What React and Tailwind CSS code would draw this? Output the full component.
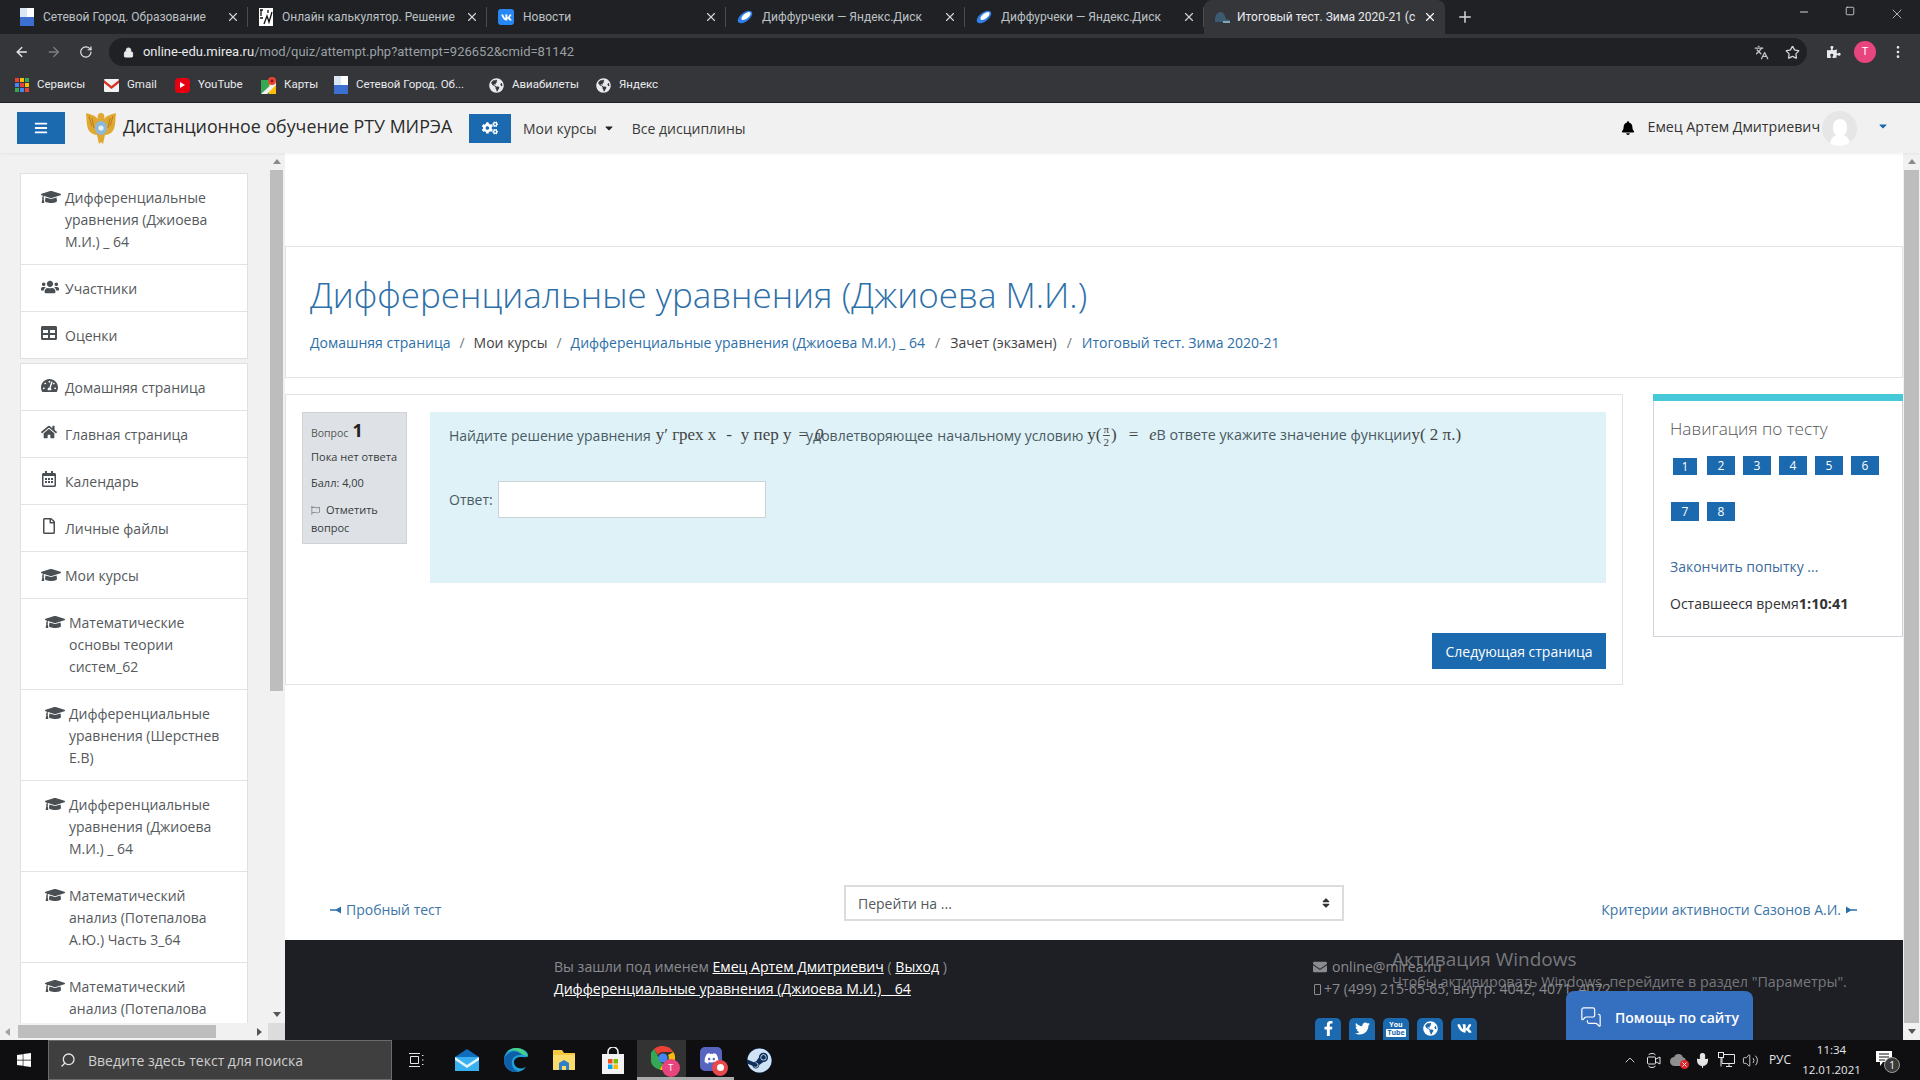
import React from "react";
import {
  ArrowLeft,
  ArrowRight,
  RotateCw,
  Lock,
  Star,
  MoreVertical,
  X,
  Plus,
  Minus,
  Search,
  ChevronUp,
  Mic,
  Volume2,
  Languages,
  MessagesSquare,
  Square,
} from "lucide-react";
import {
  FaBars,
  FaBell,
  FaCaretDown,
  FaCogs,
  FaEnvelope,
  FaFacebookF,
  FaGraduationCap,
  FaHome,
  FaPuzzlePiece,
  FaRegCalendarAlt,
  FaRegFile,
  FaRegFlag,
  FaSort,
  FaSteam,
  FaTable,
  FaTachometerAlt,
  FaTwitter,
  FaUsers,
  FaVk,
  FaWindows,
  FaGlobeAmericas,
  FaDiscord,
} from "react-icons/fa";

const UI = "font-['Open_Sans',sans-serif]";
const CHROME = "font-['Roboto',sans-serif]";

function SetevoiIcon() {
  return (
    <span className="w-[14px] h-[18px] flex flex-col shrink-0 bg-white">
      <span className="h-1/2 w-1/2 bg-[#dbe6f5]" />
      <span className="h-1/2 bg-[#3d6fd0]" />
    </span>
  );
}

function CalcIcon() {
  return (
    <span className="w-[14px] h-[18px] shrink-0 bg-white flex items-center justify-center">
      <svg width="14" height="16" viewBox="0 0 14 16" fill="none" stroke="#111" strokeWidth="1.3">
        <path d="M1 1h3M2 1v6M1 9h3M9 1v3M5 15l3-8 2 6 3-10" />
      </svg>
    </span>
  );
}

function VkIcon() {
  return (
    <span className="w-[16px] h-[16px] rounded-[3px] bg-[#2787f5] flex items-center justify-center shrink-0">
      <FaVk className="text-white text-[11px]" />
    </span>
  );
}

function DiskIcon() {
  return (
    <svg width="16" height="16" viewBox="0 0 16 16" className="shrink-0">
      <ellipse cx="8" cy="8" rx="8.5" ry="4.5" transform="rotate(-38 8 8)" fill="#2f7fe6" />
      <ellipse cx="9" cy="7" rx="5.5" ry="2.6" transform="rotate(-38 9 7)" fill="#ffffff" />
    </svg>
  );
}

function MoodleTabIcon() {
  return (
    <svg width="17" height="14" viewBox="0 0 17 14" className="shrink-0">
      <path d="M1 11C1 4 4 2 7 2s4 4 5 7l4 1v2H1z" fill="#3c5a70" />
      <path d="M9 11h7v2H9z" fill="#7fa6b8" />
    </svg>
  );
}

const tabs = [
  { title: "Сетевой Город. Образование", icon: <SetevoiIcon /> },
  { title: "Онлайн калькулятор. Решение", icon: <CalcIcon /> },
  { title: "Новости", icon: <VkIcon /> },
  { title: "Диффурчеки — Яндекс.Диск", icon: <DiskIcon /> },
  { title: "Диффурчеки — Яндекс.Диск", icon: <DiskIcon /> },
];

function ChromeTabs() {
  return (
    <div className={`h-[34px] bg-[#202124] flex pl-[9px] items-stretch ${CHROME}`}>
      {tabs.map((tab, i) => (
        <div key={i} className="w-[239px] flex items-center relative pl-[11px] pr-[8px] gap-[9px]">
          {tab.icon}
          <span className="text-[12px] text-[#bdc1c6] flex-1 whitespace-nowrap overflow-hidden">{tab.title}</span>
          <X size={14} className="text-[#d0d2d5] shrink-0" />
          <span className="w-px h-[20px] bg-[#4a4c50] absolute right-0 top-[7px]" />
        </div>
      ))}
      <div className="w-[241px] h-[34px] bg-[#35363a] rounded-t-[8px] flex items-center pl-[10px] pr-[8px] gap-[6px]">
        <MoodleTabIcon />
        <span className="text-[12px] text-[#e8eaed] flex-1 whitespace-nowrap overflow-hidden">Итоговый тест. Зима 2020-21 (с</span>
        <X size={14} className="text-white shrink-0" />
      </div>
      <div className="w-[40px] flex items-center justify-center">
        <Plus size={18} className="text-[#d5d7da]" />
      </div>
      <div className="flex-1 flex items-start justify-end text-[#d5d7da] pt-[6px]">
        <span className="w-[44px] flex justify-center"><Minus size={12} /></span>
        <span className="w-[48px] flex justify-center"><Square size={10} /></span>
        <span className="w-[46px] flex justify-center"><X size={16} strokeWidth={1.2} /></span>
      </div>
    </div>
  );
}

function Toolbar() {
  return (
    <div className={`h-[34px] bg-[#35363a] flex items-center pl-[14px] pr-[14px] pt-[2px] ${CHROME}`}>
      <ArrowLeft size={16} className="text-[#e8eaed]" />
      <ArrowRight size={16} className="text-[#7d7f83] ml-[16px]" />
      <RotateCw size={14} className="text-[#e8eaed] ml-[18px]" />
      <div className="ml-[16px] w-[1739px] h-[28px] rounded-full bg-[#202124] flex items-center pl-[14px] pr-[7px]">
        <Lock size={11} className="text-[#e8eaed]" fill="#e8eaed" />
        <span className="text-[13px] ml-[9px] text-[#e8eaed]">online-edu.mirea.ru</span>
        <span className="text-[13px] text-[#9aa0a6]">/mod/quiz/attempt.php?attempt=926652&amp;cmid=81142</span>
        <Languages size={15} className="text-[#c4c6c9] ml-auto" />
        <Star size={15} className="text-[#d5d7da] ml-[16px]" />
      </div>
      <FaPuzzlePiece className="text-[#e8eaed] text-[14px] ml-[20px]" />
      <span className="ml-[13px] w-[22px] h-[22px] rounded-full bg-[#e8457f] text-white text-[11px] flex items-center justify-center shrink-0">T</span>
      <MoreVertical size={16} className="text-[#e8eaed] ml-[14px] shrink-0" />
    </div>
  );
}

function AppsIcon() {
  const colors = ["#ea4335", "#fbbc05", "#34a853", "#4285f4", "#ea4335", "#fbbc05", "#34a853", "#4285f4", "#ea4335"];
  return (
    <span className="grid grid-cols-3 gap-[1px] w-[14px] h-[14px]">
      {colors.map((c, i) => (
        <span key={i} className="w-[4px] h-[4px]" style={{ background: c }} />
      ))}
    </span>
  );
}

function GmailIcon() {
  return (
    <svg width="15" height="13" viewBox="0 0 15 13">
      <rect width="15" height="13" rx="1" fill="#f2f2f2" />
      <path d="M0 1l7.5 6L15 1v3L7.5 10 0 4z" fill="#d93025" />
    </svg>
  );
}

function YoutubeIcon() {
  return (
    <span className="w-[15px] h-[15px] rounded-[4px] bg-[#e60012] flex items-center justify-center">
      <span className="border-l-[5px] border-l-white border-y-[3px] border-y-transparent" />
    </span>
  );
}

function MapsIcon() {
  return (
    <svg width="15" height="17" viewBox="0 0 15 17">
      <path d="M0 3l8 0 0 14-8 0z" fill="#34a853" />
      <path d="M8 3l7 0 0 14-7 0z" fill="#fbbc05" />
      <path d="M0 17L15 3v5L6 17z" fill="#f2f2f2" />
      <circle cx="11" cy="4" r="4" fill="#ea4335" />
      <circle cx="11" cy="4" r="1.4" fill="#7a1d16" />
    </svg>
  );
}

const bookmarks = [
  { label: "Сервисы", icon: <AppsIcon />, width: "w-[89px]" },
  { label: "Gmail", icon: <GmailIcon />, width: "w-[71px]" },
  { label: "YouTube", icon: <YoutubeIcon />, width: "w-[86px]" },
  { label: "Карты", icon: <MapsIcon />, width: "w-[73px]" },
  { label: "Сетевой Город. Об...", icon: <SetevoiIcon />, width: "w-[155px]" },
  { label: "Авиабилеты", icon: <FaGlobeAmericas className="text-[#e8eaed] text-[15px]" />, width: "w-[107px]" },
  { label: "Яндекс", icon: <FaGlobeAmericas className="text-[#e8eaed] text-[15px]" />, width: "w-[80px]" },
];

function BookmarksBar() {
  return (
    <div className={`h-[35px] bg-[#35363a] border-b border-[#202124] flex items-center pl-[15px] ${CHROME}`}>
      {bookmarks.map((b) => (
        <div key={b.label} className={`${b.width} flex items-center gap-[8px] shrink-0`}>
          {b.icon}
          <span className="text-[11.5px] text-[#e8eaed] whitespace-nowrap">{b.label}</span>
        </div>
      ))}
    </div>
  );
}

function Emblem() {
  return (
    <svg width="34" height="36" viewBox="0 0 34 36" className="shrink-0">
      <path d="M17 3c3 0 4 3 3 6 3-4 9-5 12-6-1 7 0 15-4 19-2 2-5 3-7 3l-2 9-2-2-2 2-2-9c-2 0-5-1-7-3C2 18 3 10 2 3c3 1 9 2 12 6-1-3 0-6 3-6z" fill="#e0a830" />
      <path d="M17 11c4 0 6 3 6 7s-3 7-6 7-6-3-6-7 2-7 6-7z" fill="#8fb8d8" />
      <path d="M8 8l2 10M26 8l-2 10M5 6l3 10M29 6l-3 10" stroke="#b87f1c" strokeWidth="1" />
      <circle cx="17" cy="18" r="2.6" fill="#e8f0f5" />
    </svg>
  );
}

function SiteHeader() {
  return (
    <div className={`h-[50px] bg-[#f1f1f1] flex items-center shrink-0 shadow-[0_1px_3px_rgba(0,0,0,0.06)] relative z-10 pl-[17px] pr-[31px] ${UI}`}>
      <div className="w-[48px] h-[32px] bg-[#1b69ae] flex items-center justify-center">
        <FaBars className="text-white text-[14px]" />
      </div>
      <div className="ml-[19px]"><Emblem /></div>
      <span className="ml-[5px] text-[17.8px] text-[#2b2b2b] whitespace-nowrap w-[346px] -mt-[3px]">Дистанционное обучение РТУ МИРЭА</span>
      <div className="w-[42px] h-[29px] bg-[#1b69ae] flex items-center justify-center">
        <FaCogs className="text-white text-[16px]" />
      </div>
      <span className="ml-[12px] text-[14px] text-[#3a3a3a] whitespace-nowrap">Мои курсы</span>
      <FaCaretDown className="text-[#222] text-[12px] ml-[6px]" />
      <span className="ml-[17px] text-[14px] text-[#3a3a3a] whitespace-nowrap">Все дисциплины</span>
      <FaBell className="text-black text-[14px] ml-auto" />
      <span className="ml-[13px] text-[14.2px] text-[#333] whitespace-nowrap -mt-[2px]">Емец Артем Дмитриевич</span>
      <span className="ml-[2px] w-[35px] h-[35px] rounded-full bg-[#e6e6e6] flex flex-col items-center justify-end overflow-hidden">
        <span className="w-[14px] h-[17px] rounded-full bg-white" />
        <span className="w-[20px] h-[12px] rounded-t-full bg-white -mt-[2px]" />
      </span>
      <FaCaretDown className="text-[#1b69ae] text-[12px] ml-[20px] -mt-[4px]" />
    </div>
  );
}

const sideCourse = [
  { label: "Дифференциальные уравнения (Джиоева М.И.) _ 64", icon: FaGraduationCap, iconClass: "text-[20px]" },
  { label: "Участники", icon: FaUsers, iconClass: "text-[18px]" },
  { label: "Оценки", icon: FaTable, iconClass: "text-[16px]" },
];

const sideSite = [
  { label: "Домашняя страница", icon: FaTachometerAlt, iconClass: "text-[17px]" },
  { label: "Главная страница", icon: FaHome, iconClass: "text-[16px]" },
  { label: "Календарь", icon: FaRegCalendarAlt, iconClass: "text-[16px]" },
  { label: "Личные файлы", icon: FaRegFile, iconClass: "text-[16px]" },
  { label: "Мои курсы", icon: FaGraduationCap, iconClass: "text-[20px]" },
];

const sideCourses = [
  "Математические основы теории систем_62",
  "Дифференциальные уравнения (Шерстнев Е.В)",
  "Дифференциальные уравнения (Джиоева М.И.) _ 64",
  "Математический анализ (Потепалова А.Ю.) Часть 3_64",
  "Математический анализ (Потепалова",
];

function SideItem({ label, icon: Icon, iconClass, nested }) {
  return (
    <div className={`flex border-b border-[#e3e3e3] last:border-b-0 pt-[13px] pb-[11px] pr-[14px] shrink-0 ${nested ? "pl-[24px]" : "pl-[20px]"}`}>
      <span className="w-[24px] shrink-0">
        <Icon className={`text-[#4a4f54] ${iconClass}`} />
      </span>
      <span className="text-[14px] leading-[22px] text-[#55595c]">{label}</span>
    </div>
  );
}

function ScrollArrow({ dir }) {
  const cls = {
    up: "border-x-[4px] border-x-transparent border-b-[5px] border-b-[#8a8a8a]",
    down: "border-x-[4px] border-x-transparent border-t-[5px] border-t-[#555]",
    left: "border-y-[4px] border-y-transparent border-r-[5px] border-r-[#a0a0a0]",
    right: "border-y-[4px] border-y-transparent border-l-[5px] border-l-[#555]",
  }[dir];
  return <span className={`block w-0 h-0 ${cls}`} />;
}

function Sidebar() {
  return (
    <div className={`w-[285px] shrink-0 bg-[#f1f1f1] flex flex-col overflow-hidden ${UI}`}>
      <div className="flex-1 flex min-h-0">
        <div className="w-[270px] pl-[20px] pr-[22px] pt-[20px] overflow-hidden">
          <div className="border border-[#e0e0e0] bg-white flex flex-col">
            {sideCourse.map((it) => (
              <SideItem key={it.label} {...it} />
            ))}
          </div>
          <div className="border border-[#e0e0e0] bg-white flex flex-col mt-[4px]">
            {sideSite.map((it) => (
              <SideItem key={it.label} {...it} />
            ))}
            {sideCourses.map((label, i) => (
              <SideItem key={i} label={label} icon={FaGraduationCap} iconClass="text-[20px]" nested />
            ))}
          </div>
        </div>
        <div className="w-[13px] flex flex-col items-center">
          <div className="h-[17px] flex items-center justify-center"><ScrollArrow dir="up" /></div>
          <div className="w-[13px] h-[521px] bg-[#bdbdbd]" />
          <div className="mt-auto h-[18px] flex items-center justify-center"><ScrollArrow dir="down" /></div>
        </div>
        <div className="w-[2px]" />
      </div>
      <div className="h-[17px] flex items-center pl-[5px] shrink-0">
        <ScrollArrow dir="left" />
        <div className="w-[199px] h-[13px] bg-[#bdbdbd] ml-[8px]" />
        <div className="ml-[41px]"><ScrollArrow dir="right" /></div>
        <div className="ml-[6px] w-[17px] h-[17px] bg-[#dcdcdc]" />
      </div>
    </div>
  );
}

const MATH = "font-['Liberation_Serif',serif] text-[#444]";

function QuestionText() {
  return (
    <div className="flex items-center text-[14px] text-[#4a5a62] whitespace-nowrap h-[34px]">
      <span>Найдите решение уравнения</span>
      <span className={`${MATH} text-[17px] ml-[5px]`}>y′ грех x</span>
      <span className={`${MATH} text-[17px] ml-[10px]`}>-</span>
      <span className={`${MATH} text-[17px] ml-[9px]`}>y пер y</span>
      <span className={`${MATH} text-[17px] ml-[7px]`}>=</span>
      <span className="ml-[-2px]">удовлетворяющее</span>
      <span className={`${MATH} italic text-[17px] -ml-[118px] mr-[110px]`}>0</span>
      <span className="ml-[4px]">начальному условию</span>
      <span className={`${MATH} text-[17px] ml-[4px]`}>y(</span>
      <span className={`${MATH} flex flex-col items-center text-[11px] leading-[12px] mx-[1px]`}>
        <i className="border-b border-[#555] px-[1px] not-italic">π</i>
        <span>2</span>
      </span>
      <span className={`${MATH} text-[17px]`}>)</span>
      <span className={`${MATH} text-[17px] ml-[12px]`}>=</span>
      <span className={`${MATH} italic text-[16px] ml-[11px]`}>e</span>
      <span className="text-[14.3px]">В ответе укажите значение функции</span>
      <span className={`${MATH} text-[17px]`}>y( 2 π.)</span>
    </div>
  );
}

function QuestionCard() {
  return (
    <div className={`w-[1338px] h-[291px] border border-[#e3e3e3] bg-white flex flex-col pl-[16px] pr-[16px] pt-[17px] ${UI}`}>
      <div className="flex gap-[23px]">
        <div className="w-[105px] h-[132px] shrink-0 bg-[#dee2e6] border border-[#cfd3d6] pl-[8px] pt-[4px] text-[11px] text-[#373a3c]">
          <div className="h-[24px] flex items-baseline gap-[4px] text-[10.5px] text-[#555]">
            Вопрос <b className="text-[18px] text-[#222]">1</b>
          </div>
          <div className="mt-[8px] leading-[16px]">Пока нет ответа</div>
          <div className="mt-[10px] leading-[16px]">Балл: 4,00</div>
          <div className="mt-[10px] leading-[18px]">
            <FaRegFlag className="inline text-[#888] text-[9px] mr-[6px] -mt-[2px]" />
            Отметить<br />вопрос
          </div>
        </div>
        <div className="flex-1 h-[171px] bg-[#def2f8] pl-[19px] pt-[6px]">
          <QuestionText />
          <div className="flex items-center mt-[29px]">
            <span className="text-[14px] text-[#4a5a62] mr-[5px]">Ответ:</span>
            <div className="w-[268px] h-[37px] bg-white border border-[#ccd2d6]" />
          </div>
        </div>
      </div>
      <div className="flex justify-end mt-[50px]">
        <div className="w-[174px] h-[36px] bg-[#1b69ae] text-white text-[14px] flex items-center justify-center whitespace-nowrap">Следующая страница</div>
      </div>
    </div>
  );
}

function NavCard() {
  return (
    <div className={`w-[250px] h-[243px] border border-[#ced4da] border-t-0 bg-white ${UI}`}>
      <div className="h-[7px] bg-[#45c8d8] -ml-px -mr-px" />
      <div className="pl-[16px] pt-[16px]">
        <div className="text-[17.2px] font-light text-[#555] leading-[24px]">Навигация по тесту</div>
        <div className="flex flex-wrap w-[220px] gap-x-[8px] gap-y-[27px] mt-[15px] pl-px">
          {[1, 2, 3, 4, 5, 6, 7, 8].map((n) => (
            <div
              key={n}
              className={`w-[28px] h-[19px] bg-[#1b69ae] bg-clip-padding text-white text-[12px] flex items-center justify-center ${n === 1 ? "border-x-2 border-t-2 border-white" : ""}`}
            >
              {n}
            </div>
          ))}
        </div>
        <div className="mt-[36px] text-[14px] text-[#3b6a9c] leading-[20px]">Закончить попытку ...</div>
        <div className="mt-[17px] text-[14px] text-[#333] leading-[20px] whitespace-nowrap">
          Оставшееся время<b className="text-[14.5px]">1:10:41</b>
        </div>
      </div>
    </div>
  );
}

function PinArrow({ flip }) {
  return (
    <svg width="12" height="8" viewBox="0 0 12 8" className={`inline mr-[4px] ml-[4px] -mt-[2px] ${flip ? "-scale-x-100" : ""}`}>
      <path d="M0 3.200h6v1.600H0zM5 4l6-3.500v7z" fill="#2b6ea8" />
    </svg>
  );
}

function MainColumn() {
  return (
    <div className={`flex-1 bg-white flex flex-col min-w-0 ${UI}`}>
      <div className="h-[93px] shrink-0" />
      <div className="h-[132px] border border-[#e3e3e3] pl-[24px] pt-[24px] shrink-0">
        <h1 className="text-[35px] font-light text-[#2d6fa8] leading-[48px] whitespace-nowrap">Дифференциальные уравнения (Джиоева М.И.)</h1>
        <div className="flex text-[14px] mt-[13px] whitespace-nowrap">
          <span className="text-[#2d6fa8]">Домашняя страница</span>
          <span className="text-[#777] mx-[9px]">/</span>
          <span className="text-[#444]">Мои курсы</span>
          <span className="text-[#777] mx-[9px]">/</span>
          <span className="text-[#2d6fa8]">Дифференциальные уравнения (Джиоева М.И.) _ 64</span>
          <span className="text-[#777] mx-[10px]">/</span>
          <span className="text-[#444]">Зачет (экзамен)</span>
          <span className="text-[#777] mx-[10px]">/</span>
          <span className="text-[#2d6fa8]">Итоговый тест. Зима 2020-21</span>
        </div>
      </div>
      <div className="flex justify-between mt-[16px] shrink-0">
        <QuestionCard />
        <NavCard />
      </div>
      <div className="flex-1 flex items-start pt-[200px] pl-[41px] pr-[42px]">
        <div className="w-[518px] pt-[14px] text-[14px] text-[#3b75a8] whitespace-nowrap">
          <PinArrow />Пробный тест
        </div>
        <div className="w-[500px] h-[36px] border-2 border-[#dcdcdc] flex items-center pl-[12px] pr-[10px] text-[14px] text-[#55595c]">
          Перейти на ...
          <FaSort className="ml-auto text-[#333] text-[12px]" />
        </div>
        <div className="flex-1 pt-[14px] text-right text-[14px] text-[#3b75a8] whitespace-nowrap">
          Критерии активности Сазонов А.И.<PinArrow flip />
        </div>
      </div>
      <SiteFooter />
    </div>
  );
}

function YouTubeStacked() {
  return (
    <span className="flex flex-col items-center text-white font-bold text-[7px] leading-[8px]">
      <span>You</span>
      <span className="bg-white text-[#1b69ae] rounded-[1px] px-[1px]">Tube</span>
    </span>
  );
}

const socials = [
  <FaFacebookF className="text-white text-[15px]" />,
  <FaTwitter className="text-white text-[15px]" />,
  <YouTubeStacked />,
  <FaGlobeAmericas className="text-white text-[15px]" />,
  <FaVk className="text-white text-[15px]" />,
];

function SiteFooter() {
  return (
    <div className="h-[100px] bg-[#1e1f24] shrink-0 flex pl-[269px] pt-[16px] text-[14.1px] text-[#8a8b90] overflow-hidden">
      <div className="w-[759px] leading-[22px] whitespace-nowrap">
        <div>
          Вы зашли под именем <u className="text-white">Емец Артем Дмитриевич</u> ( <u className="text-white">Выход</u> )
        </div>
        <div><u className="text-white">Дифференциальные уравнения (Джиоева М.И.) _ 64</u></div>
      </div>
      <div className="leading-[22px] whitespace-nowrap">
        <div className="flex items-center gap-[5px]"><FaEnvelope className="text-[14px]" />online@mirea.ru</div>
        <div className="flex items-center gap-[3px]">
          <span className="w-[7px] h-[11px] border border-[#8a8b90] rounded-[1px] ml-[1px]" />
          +7 (499) 215-65-65, внутр. 4042, 4071, 4072
        </div>
        <div className="flex gap-[8px] mt-[18px] ml-[2px]">
          {socials.map((icon, i) => (
            <span key={i} className="w-[26px] h-[30px] rounded-[5px] bg-[#1b69ae] flex items-start pt-[3px] justify-center">
              {icon}
            </span>
          ))}
        </div>
      </div>
    </div>
  );
}

function PageScrollbar() {
  return (
    <div className="w-[17px] shrink-0 bg-[#f1f1f1] flex flex-col items-center">
      <div className="h-[17px] flex items-center justify-center"><ScrollArrow dir="up" /></div>
      <div className="w-[15px] h-[862px] bg-[#bdbdbd]" />
      <div className="mt-auto h-[17px] flex items-center justify-center"><ScrollArrow dir="down" /></div>
    </div>
  );
}

function MailTaskIcon() {
  return (
    <svg width="24" height="24" viewBox="0 0 24 24">
      <path d="M12 1L0 9v14h24V9z" fill="#0f6cbd" />
      <path d="M0 9h24v14H0z" fill="#39b1f0" />
      <path d="M0 9l12 8 12-8v3l-12 8-12-8z" fill="#e2f4ff" />
    </svg>
  );
}

function EdgeTaskIcon() {
  return (
    <svg width="24" height="26" viewBox="0 0 24 26">
      <path d="M12 1C5 1 0 6 0 13c0 7 5 12 11 12 5 0 9-2 11-5-5 3-12 1-12-5 0-3 3-5 7-5 3 0 7 1 7-2C24 4 18 1 12 1z" fill="#1fa0d8" />
      <path d="M0 13c0 7 5 12 11 12 1 0 2 0 3-1-4-1-7-5-6-10C9 9 13 8 18 8 15 4 9 3 5 6 2 8 0 10 0 13z" fill="#0f5fa8" />
      <path d="M24 11c0-5-5-10-12-10C8 1 5 3 3 5c5-3 11-2 15 2 3 1 6 2 6 4z" fill="#45d483" />
    </svg>
  );
}

function ExplorerIcon() {
  return (
    <svg width="24" height="22" viewBox="0 0 24 22">
      <path d="M1 1h9l2 3h11v17H1z" fill="#f5c842" />
      <path d="M1 6h22v15H1z" fill="#fbdc6a" />
      <path d="M7 21v-7l5-3 5 3v7h-3v-4h-4v4z" fill="#2f7ec9" />
    </svg>
  );
}

function StoreIcon() {
  return (
    <svg width="24" height="27" viewBox="0 0 24 27">
      <path d="M7 8V5a5 5 0 0110 0v3" fill="none" stroke="#f2f2f2" strokeWidth="1.6" />
      <path d="M1 7h22v20H1z" fill="#f2f2f2" />
      <path d="M7 12h4.5v4.5H7z" fill="#f25022" />
      <path d="M12.5 12H17v4.5h-4.5z" fill="#7fba00" />
      <path d="M7 17.500h4.500V22H7z" fill="#00a4ef" />
      <path d="M12.500 17.500H17V22h-4.500z" fill="#ffb900" />
    </svg>
  );
}

function ChromeTaskIcon() {
  return (
    <span className="relative w-[24px] h-[26px] block ml-[3px]">
      <svg width="24" height="24" viewBox="0 0 24 24">
        <path d="M12 0a12 12 0 0110.400 6H12a6 6 0 00-5.200 3L3 3a12 12 0 019-3z" fill="#ea4335" />
        <path d="M3 3l5 9a6 6 0 004 5.700L8.500 23.500A12 12 0 013 3z" fill="#34a853" />
        <path d="M22.400 6A12 12 0 018.500 23.500L12 18a6 6 0 005-9z" fill="#fbbc05" />
        <circle cx="12" cy="12" r="4.600" fill="#4285f4" />
      </svg>
      <span className="absolute right-[-5px] bottom-[-5px] w-[18px] h-[18px] rounded-full bg-[#e8457f] text-white text-[9px] flex items-center justify-center">T</span>
    </span>
  );
}

function DiscordIcon() {
  return (
    <span className="relative w-[22px] h-[24px] ml-[3px] rounded-[5px] bg-[#5865c0] flex items-center justify-center">
      <FaDiscord className="text-white text-[15px]" />
      <span className="absolute right-[-6px] bottom-[-5px] w-[16px] h-[16px] rounded-full bg-[#e8474c] flex items-center justify-center">
        <span className="w-[7px] h-[7px] rounded-full bg-white" />
      </span>
    </span>
  );
}

function TaskViewIcon() {
  return (
    <svg width="16" height="16" viewBox="0 0 16 16" fill="none" stroke="#e6e6e6">
      <path d="M1 1.500h11M1 14.500h11M2.500 4.500h8v7h-8z" />
      <path d="M14 3.500h1.500M14 8h1.500M14 12.500h1.500" />
    </svg>
  );
}

function TrayCamera() {
  return (
    <svg width="14" height="17" viewBox="0 0 14 17" fill="none" stroke="#e6e6e6">
      <path d="M1.500 3C3 1 7 1 8.500 3M1.500 14C3 16 7 16 8.500 14" />
      <rect x="0.500" y="5" width="8" height="7" rx="1" />
      <path d="M9 7l4-2v7l-4-2" />
    </svg>
  );
}

function TrayCloud() {
  return (
    <span className="relative block w-[16px] h-[12px]">
      <span className="absolute left-0 bottom-0 w-[16px] h-[9px] rounded-full bg-[#8f8f8f]" />
      <span className="absolute left-[4px] top-0 w-[9px] h-[9px] rounded-full bg-[#8f8f8f]" />
      <span className="absolute right-[-3px] bottom-[-3px] w-[9px] h-[9px] rounded-full bg-[#e0252b] flex items-center justify-center">
        <X size={7} className="text-white" strokeWidth={3} />
      </span>
    </span>
  );
}

function TrayNetwork() {
  return (
    <svg width="17" height="17" viewBox="0 0 17 17" fill="none" stroke="#e6e6e6">
      <path d="M4 2.500h12.500v9H4zM8 14.500h6M11 11.500v3" />
      <rect x="0.500" y="0.500" width="5" height="5" fill="#0f0f11" />
      <path d="M3 5.500v9" />
    </svg>
  );
}

function TrayNotifications() {
  return (
    <span className="relative block w-[16px] h-[15px]">
      <svg width="16" height="15" viewBox="0 0 16 15">
        <path d="M0 0h16v11H7l-3 4v-4H0z" fill="#fff" />
        <path d="M3 3h10M3 6h10M3 9h6" stroke="#0f0f11" />
      </svg>
      <span className="absolute right-[-8px] bottom-[-7px] w-[16px] h-[16px] rounded-full bg-[#3a3a3a] border border-[#9a9a9a] text-[10px] leading-none text-white flex items-center justify-center">1</span>
    </span>
  );
}

const taskApps = [
  { id: "mail", icon: <MailTaskIcon /> },
  { id: "edge", icon: <EdgeTaskIcon /> },
  { id: "files", icon: <ExplorerIcon /> },
  { id: "store", icon: <StoreIcon /> },
  { id: "chrome", icon: <ChromeTaskIcon />, active: true },
  { id: "discord", icon: <DiscordIcon />, open: true },
  { id: "steam", icon: <FaSteam className="text-[#cfe3f5] text-[25px] bg-[#10305a] rounded-full ml-[2px]" /> },
];

const trayIcons = [
  <ChevronUp size={16} strokeWidth={1.3} />,
  <TrayCamera />,
  <TrayCloud />,
  <Mic size={17} fill="#e6e6e6" strokeWidth={1.5} />,
  <TrayNetwork />,
  <Volume2 size={17} strokeWidth={1.2} />,
];

function Taskbar() {
  return (
    <div className={`h-[40px] bg-[#0f0f11] flex items-stretch shrink-0 ${UI}`}>
      <div className="w-[48px] flex items-center justify-center">
        <FaWindows className="text-white text-[16px]" />
      </div>
      <div className="w-[344px] bg-[#3f3f3f] border border-[#6b6b6b] flex items-center pl-[11px]">
        <Search size={16} className="text-[#e6e6e6] -scale-x-100" />
        <span className="ml-[12px] text-[14px] text-[#cfcfcf] whitespace-nowrap">Введите здесь текст для поиска</span>
      </div>
      <div className="w-[48px] flex items-center justify-center"><TaskViewIcon /></div>
      <div className="flex ml-[3px]">
        {taskApps.map((app) => (
          <div
            key={app.id}
            className={`w-[48.5px] flex items-center justify-center ${app.active ? "bg-[#333] border-b-[3px] border-[#aaa]" : ""} ${app.open ? "border-b-[3px] border-[#aaa]" : ""}`}
          >
            {app.icon}
          </div>
        ))}
      </div>
      <div className="flex-1" />
      <div className="flex items-center text-[#e6e6e6] pr-[17px]">
        {trayIcons.map((icon, i) => (
          <span key={i} className="w-[24px] flex items-center justify-center">{icon}</span>
        ))}
        <span className="w-[36px] text-center text-[12px]">РУС</span>
        <div className="w-[67px] text-[11.5px] leading-[20px] text-center whitespace-nowrap">
          <div>11:34</div>
          <div>12.01.2021</div>
        </div>
        <span className="w-[38px] flex items-center justify-center -mt-[3px]"><TrayNotifications /></span>
      </div>
    </div>
  );
}

export default function App() {
  return (
    <div className="w-[1920px] h-[1080px] flex flex-col overflow-hidden relative">
      <ChromeTabs />
      <Toolbar />
      <BookmarksBar />
      <SiteHeader />
      <div className="flex-1 flex min-h-0">
        <Sidebar />
        <MainColumn />
        <PageScrollbar />
      </div>
      <Taskbar />

      {/* watermark and chat button lie over the footer */}
      <div className={`absolute left-[1392px] top-[946px] text-[#8f9094]/80 ${UI} pointer-events-none whitespace-nowrap`}>
        <div className="text-[19px] leading-[26px]">Активация Windows</div>
        <div className="text-[14.3px] leading-[19px]">Чтобы активировать Windows, перейдите в раздел "Параметры".</div>
      </div>
      <div className={`absolute left-[1566px] top-[991px] w-[187px] h-[49px] rounded-t-[8px] bg-[#356fc0] flex items-center pl-[14px] pt-[3px] gap-[13px] text-white text-[14px] font-semibold ${UI}`}>
        <MessagesSquare size={22} strokeWidth={1.3} />
        Помощь по сайту
      </div>
    </div>
  );
}
